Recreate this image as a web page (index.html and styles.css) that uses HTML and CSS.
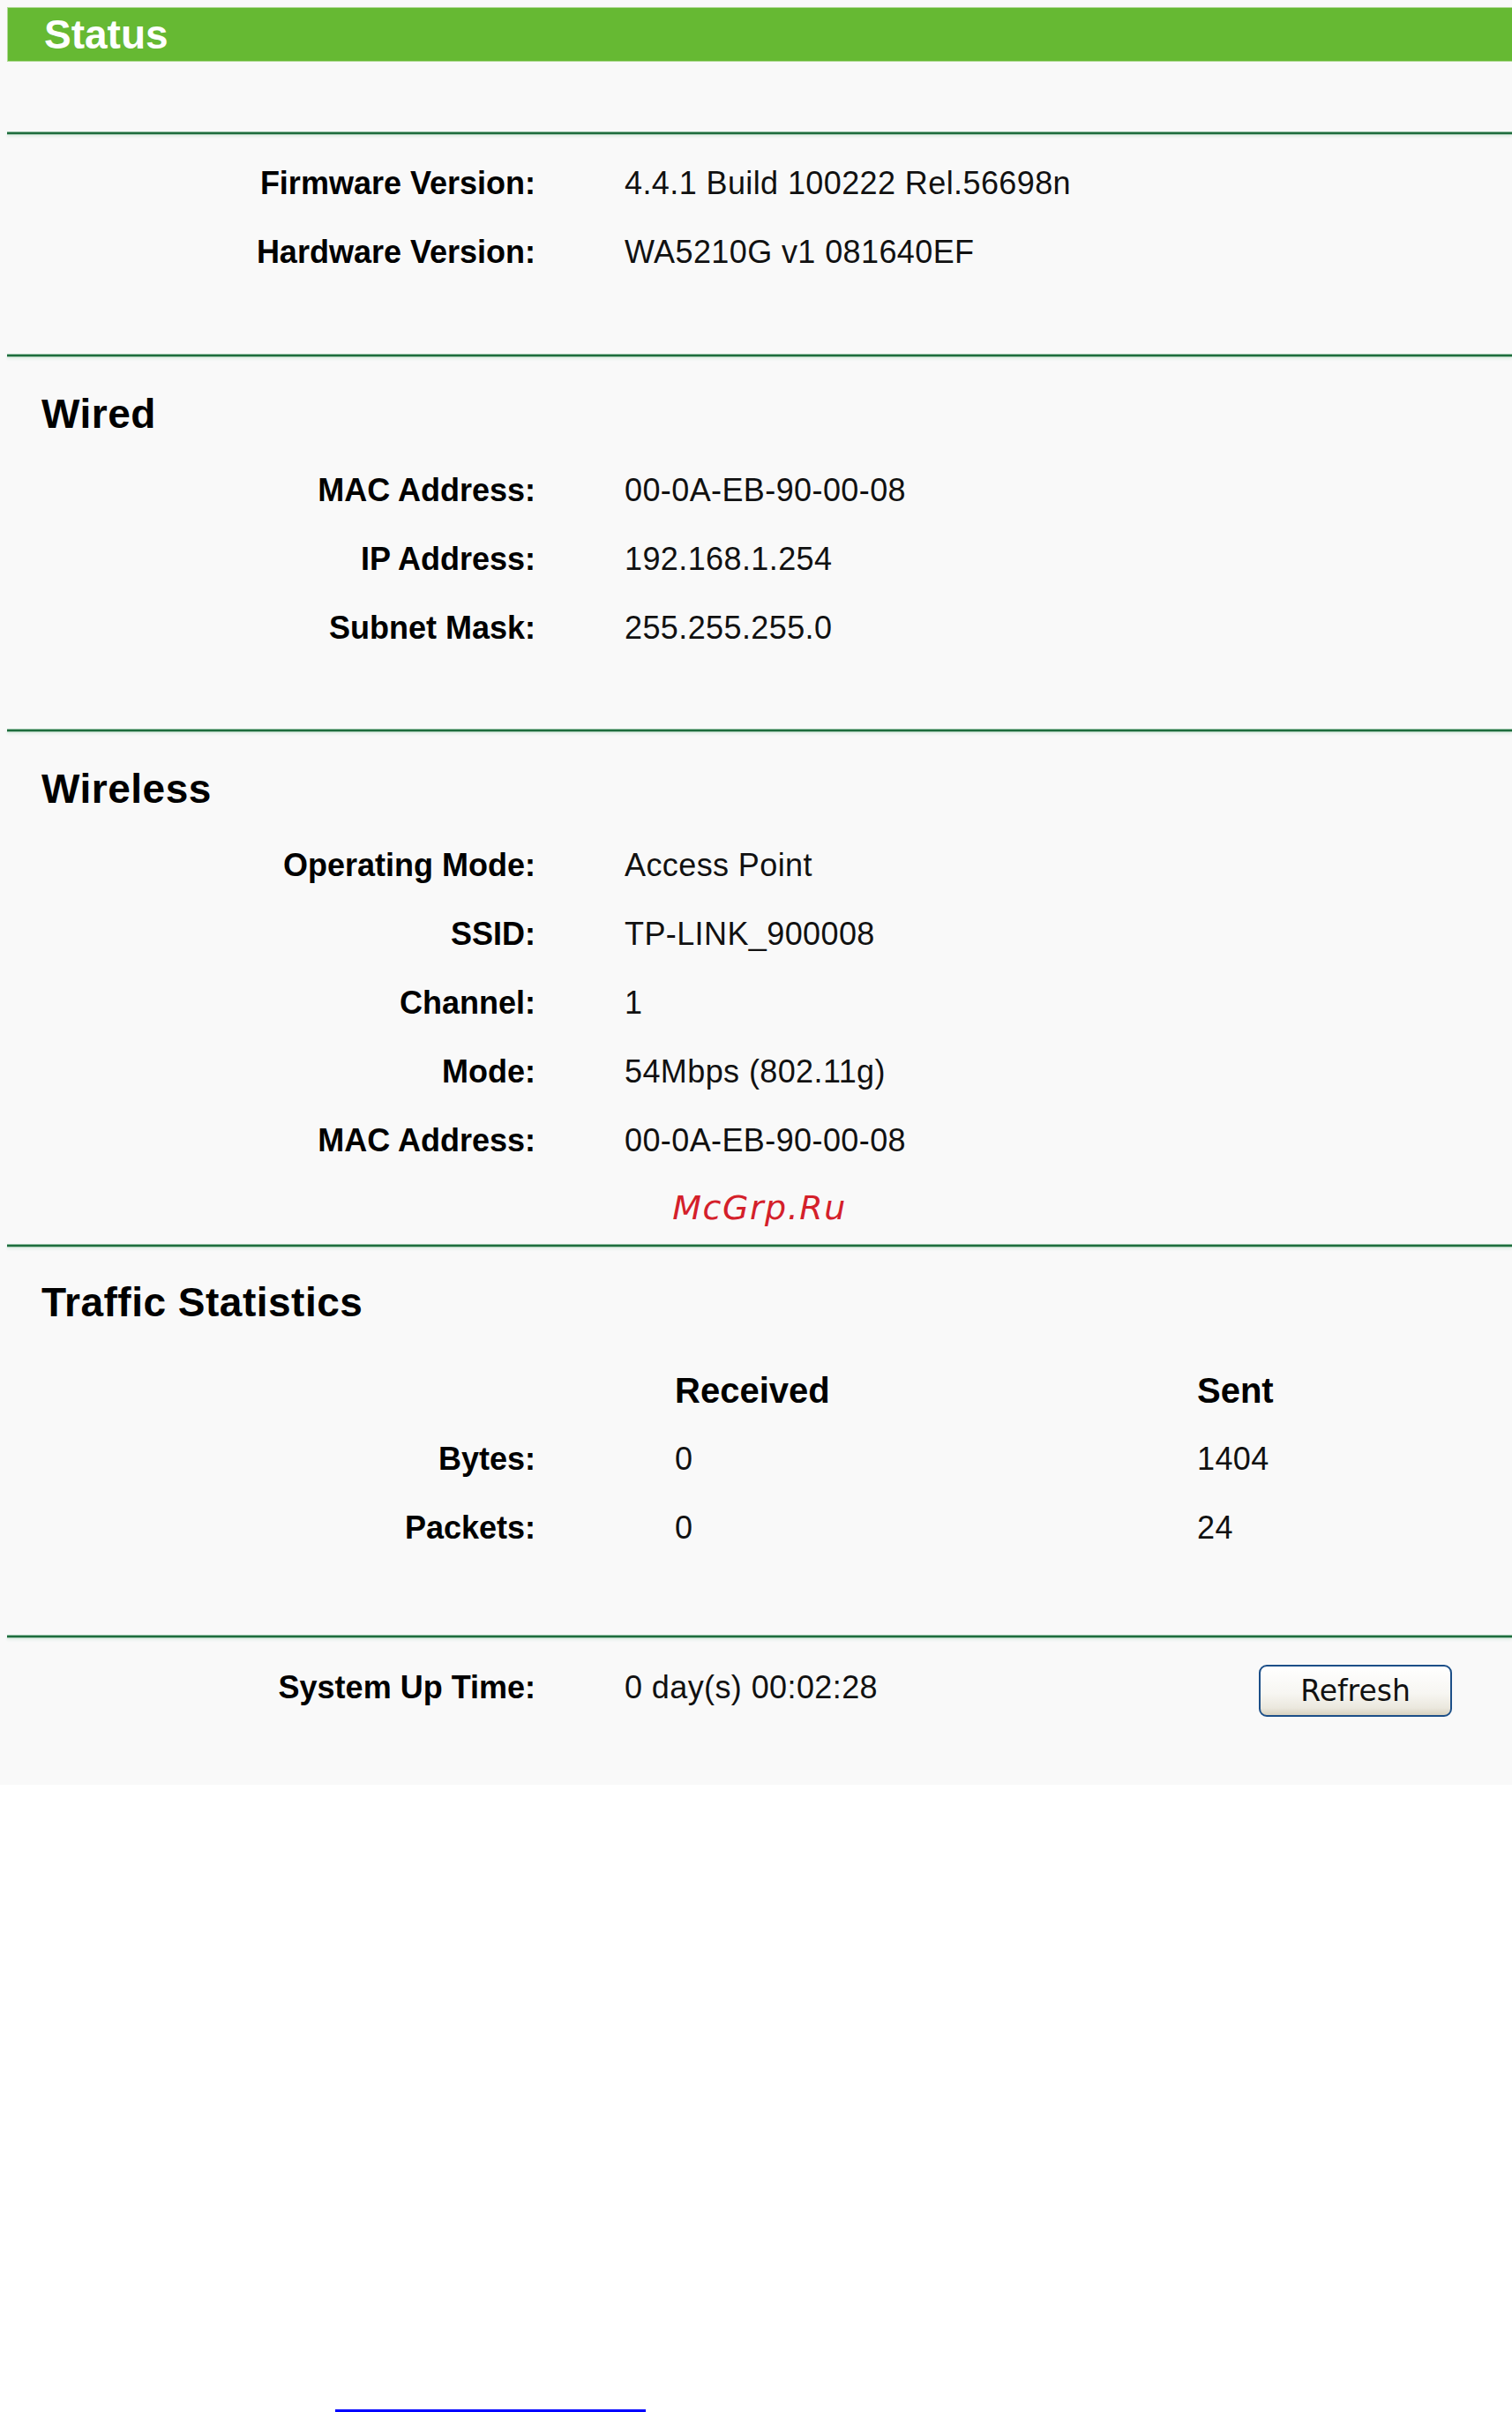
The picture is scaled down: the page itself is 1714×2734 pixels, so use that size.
FILE: index.html
```html
<!DOCTYPE html>
<html lang="en">
<head>
<meta charset="utf-8">
<title>Status</title>
<link rel="stylesheet" href="styles.css">
</head>
<body>
<div class="page">
  <div class="topbar"><span class="topbar-title">Status</span></div>

  <div class="rule rule-first"></div>
  <section class="sec sec-info">
    <div class="grid">
      <div class="lbl">Firmware Version:</div><div class="val">4.4.1 Build 100222 Rel.56698n</div>
      <div class="lbl">Hardware Version:</div><div class="val">WA5210G v1 081640EF</div>
    </div>
  </section>

  <div class="rule"></div>
  <section class="sec sec-wired">
    <h2 class="sec-title">Wired</h2>
    <div class="grid">
      <div class="lbl">MAC Address:</div><div class="val">00-0A-EB-90-00-08</div>
      <div class="lbl">IP Address:</div><div class="val">192.168.1.254</div>
      <div class="lbl">Subnet Mask:</div><div class="val">255.255.255.0</div>
    </div>
  </section>

  <div class="rule"></div>
  <section class="sec sec-wireless">
    <h2 class="sec-title">Wireless</h2>
    <div class="grid">
      <div class="lbl">Operating Mode:</div><div class="val">Access Point</div>
      <div class="lbl">SSID:</div><div class="val">TP-LINK_900008</div>
      <div class="lbl">Channel:</div><div class="val">1</div>
      <div class="lbl">Mode:</div><div class="val">54Mbps (802.11g)</div>
      <div class="lbl">MAC Address:</div><div class="val">00-0A-EB-90-00-08</div>
    </div>
    <div class="watermark">McGrp.Ru</div>
  </section>

  <div class="rule"></div>
  <section class="sec sec-traffic">
    <h2 class="sec-title">Traffic Statistics</h2>
    <div class="tgrid">
      <div class="lbl"></div><div class="th">Received</div><div class="th">Sent</div>
      <div class="lbl">Bytes:</div><div class="val">0</div><div class="val">1404</div>
      <div class="lbl">Packets:</div><div class="val">0</div><div class="val">24</div>
    </div>
  </section>

  <div class="rule"></div>
  <section class="sec sec-uptime">
    <div class="ugrid">
      <div class="lbl">System Up Time:</div><div class="val">0 day(s) 00:02:28</div>
      <button class="btn" type="button">Refresh</button>
    </div>
  </section>
</div>
<div class="link-line"></div>
</body>
</html>
```

FILE: styles.css
```css
html, body {
  margin: 0;
  padding: 0;
  background: #ffffff;
}

body {
  font-family: "Liberation Sans", Arial, sans-serif;
  color: #000;
}

.page {
  background: #f9f9f9;
  padding: 8px 0 0 8px;
}

.topbar {
  height: 60px;
  background: #66b933;
  border-top: 1px solid #b2da98;
  border-bottom: 1px solid #b2da98;
  border-left: 1px solid #b2da98;
  padding-left: 41px;
  line-height: 60px;
}

.topbar-title {
  color: #ffffff;
  font-size: 46px;
  font-weight: bold;
}

.rule {
  height: 2px;
  background: #1f6d3e;
  border-top: 1px solid #8fbda0;
  border-bottom: 1px solid #a7cbb4;
  box-shadow: 0 2px 3px #e3eee7;
}

.rule-first {
  margin-top: 79px;
}

.sec-info {
  padding: 16px 0 76px;
}

.sec-wired {
  padding: 33px 0 75px;
}

.sec-wireless {
  padding: 33px 0 16px;
}

.sec-traffic {
  padding: 31px 0 82px;
}

.sec-uptime {
  padding: 17px 0 71px;
}

.sec-title {
  margin: 0 0 17px;
  padding-left: 39px;
  height: 62px;
  line-height: 62px;
  font-size: 46px;
  font-weight: bold;
  letter-spacing: 0.5px;
}

.sec-traffic .sec-title {
  margin-bottom: 30px;
}

.grid {
  display: grid;
  grid-template-columns: 599px 1fr;
  column-gap: 101px;
}

.tgrid {
  display: grid;
  grid-template-columns: 757px 592px 1fr;
}

.tgrid .lbl {
  margin-right: 158px;
}

.ugrid {
  display: grid;
  grid-template-columns: 599px 1fr auto;
  column-gap: 101px;
  padding-right: 68px;
}

.lbl,
.val,
.th {
  height: 78px;
  line-height: 78px;
  font-size: 36px;
  white-space: nowrap;
}

.lbl {
  text-align: right;
  font-weight: bold;
}

.val {
  color: #111;
  letter-spacing: 0.4px;
}

.th {
  font-size: 40px;
  font-weight: bold;
}

.watermark {
  margin-top: 12px;
  height: 50px;
  line-height: 50px;
  text-align: center;
  font-family: "DejaVu Sans", sans-serif;
  font-style: oblique;
  font-size: 38px;
  letter-spacing: 1.5px;
  color: #d4202a;
}

.btn {
  align-self: start;
  margin-top: 13px;
  width: 219px;
  height: 59px;
  padding: 0;
  border: 2px solid #1c4f88;
  border-radius: 9px;
  background: linear-gradient(#ffffff 0%, #f7f6f2 55%, #ebe8de 85%, #d8d2c0 100%);
  font-family: "DejaVu Sans", sans-serif;
  font-size: 33px;
  color: #111;
  line-height: 55px;
}

.link-line {
  margin: 708px 0 0 380px;
  width: 352px;
  height: 3px;
  background: #0000ff;
}
```
